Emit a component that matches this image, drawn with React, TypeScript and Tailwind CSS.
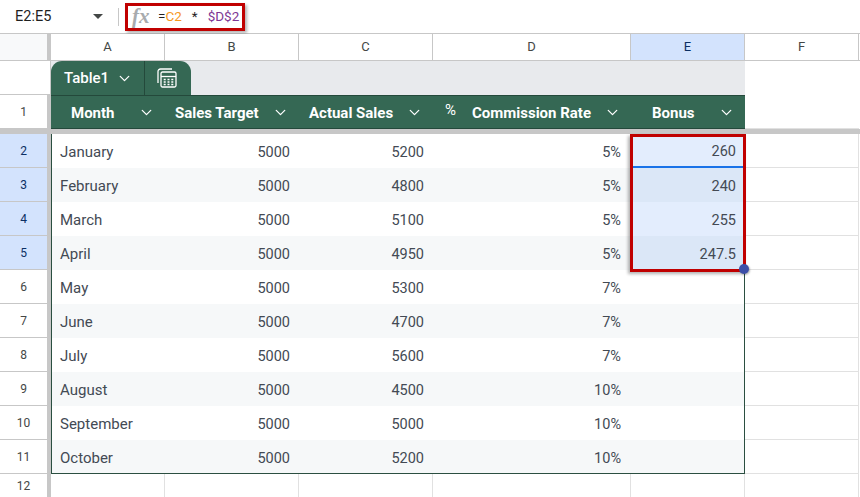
import { ChevronDown } from 'lucide-react';

const COLS = 'grid grid-cols-[51px_114px_134px_134px_198px_114px_114px_1px]';
const FONT = "font-['Roboto',sans-serif]";

const rows = [
  ['January', '5000', '5200', '5%', '260'],
  ['February', '5000', '4800', '5%', '240'],
  ['March', '5000', '5100', '5%', '255'],
  ['April', '5000', '4950', '5%', '247.5'],
  ['May', '5000', '5300', '7%', ''],
  ['June', '5000', '4700', '7%', ''],
  ['July', '5000', '5600', '7%', ''],
  ['August', '5000', '4500', '10%', ''],
  ['September', '5000', '5000', '10%', ''],
  ['October', '5000', '5200', '10%', ''],
];

const Chevron = () => <ChevronDown size={17} strokeWidth={1.8} className="text-white" />;

const TableIcon = () => (
  <svg width="20" height="20" viewBox="0 0 20 20" fill="none" stroke="white" strokeWidth="1.3">
    <path d="M1 15V3.5C1 2.1 2.1 1 3.5 1H15" />
    <rect x="4" y="4" width="15" height="15" rx="1.5" />
    <path d="M4 8.5H19" />
    <path d="M6.7 11.5H8.7M10.5 11.5H12.5M14.3 11.5H16.3M6.7 14H8.7M10.5 14H12.5M14.3 14H16.3M6.7 16.5H8.7M10.5 16.5H12.5M14.3 16.5H16.3" strokeWidth="1.5" />
  </svg>
);

const ColumnHeader = ({ label, selected }: { label: string; selected?: boolean }) => (
  <div
    className={`flex items-center justify-center border-r border-[#c7c7c7] text-[13px] ${
      selected ? 'bg-[#d3e3fd] text-[#0b2f63]' : 'bg-white text-[#444746]'
    }`}
  >
    {label}
  </div>
);

const RowNumber = ({ n, selected }: { n: number; selected?: boolean }) => (
  <div
    className={`flex items-center justify-center border-r-[4px] border-b border-r-[#c7c7c7] border-b-[#c7c7c7] text-[12px] ${
      selected ? 'bg-[#d3e3fd] text-[#0b2f63]' : 'bg-white text-[#444746]'
    }`}
  >
    {n}
  </div>
);

const HeaderCell = ({ label, className }: { label: string; className?: string }) => (
  <div className={`flex items-center ${className ?? ''}`}>
    <span className="pt-[3px] text-[15px] font-bold whitespace-nowrap text-white">{label}</span>
    <Chevron />
  </div>
);

export default function App() {
  return (
    <div className={`${FONT} h-[497px] w-[860px] overflow-hidden bg-white`}>
      {/* formula bar */}
      <div className="flex h-[34px] items-center border-b border-[#c7c7c7]">
        <span className="ml-[15px] w-[78px] text-[14.5px] text-[#1f1f1f]">E2:E5</span>
        <span className="h-0 w-0 border-x-[5px] border-t-[5px] border-x-transparent border-t-[#444746]" />
        <span className="ml-[15px] h-[18px] w-px bg-[#c7c7c7]" />
        <div className="ml-[6px] flex h-[28px] w-[120px] items-center border-[3px] border-[#c00000] pl-[4px] shadow-[2px_2px_3px_rgba(0,0,0,0.3)]">
          <span className="w-[26px] font-['Liberation_Serif',serif] text-[21px] leading-none font-bold text-[#a8abae] italic">fx</span>
          <span className="flex text-[13.5px] whitespace-pre text-[#1f1f1f]">
            =<span className="text-[#f7981d]">C2</span>
            <span className="ml-[10px]">*</span>
            <span className="ml-[10px] text-[#7e3794]">$D$2</span>
          </span>
        </div>
      </div>

      {/* column letters */}
      <div className={`${COLS} h-[27px] border-b border-[#c7c7c7]`}>
        <div className="border-r-[4px] border-r-[#c7c7c7] bg-[#f8f9fa]" />
        <ColumnHeader label="A" />
        <ColumnHeader label="B" />
        <ColumnHeader label="C" />
        <ColumnHeader label="D" />
        <ColumnHeader label="E" selected />
        <ColumnHeader label="F" />
        <div className="bg-white" />
      </div>

      {/* table tab */}
      <div className="flex h-[34px]">
        <div className="w-[51px] shrink-0 border-r border-b border-[#c7c7c7]" />
        <div className="flex w-[694px] bg-[#e8eaed]">
          <div className="flex h-[34px] w-[140px] items-center rounded-t-[11px] bg-[#356854] text-white">
            <div className="flex h-full w-[94px] items-center gap-[7px] border-r border-[#24493b] pl-[13px]">
              <span className="text-[15px] font-medium">Table1</span>
              <Chevron />
            </div>
            <div className="flex flex-1 items-center justify-center pr-[2px]">
              <TableIcon />
            </div>
          </div>
        </div>
      </div>

      {/* table header */}
      <div className={`${COLS} h-[34px]`}>
        <RowNumber n={1} />
        <div className="col-span-5 flex border-y border-[#24493b] bg-[#356854]">
          <HeaderCell label="Month" className="w-[114px] justify-between pr-[10px] pl-[20px]" />
          <HeaderCell label="Sales Target" className="w-[134px] justify-between pr-[10px] pl-[10px]" />
          <HeaderCell label="Actual Sales" className="w-[134px] justify-between pr-[10px] pl-[10px]" />
          <div className="flex w-[198px] items-center pr-[10px] pl-[12px]">
            <span className="w-[27px] pb-[3px] text-[15px] text-white">%</span>
            <span className="flex-1 pt-[3px] text-[15px] font-bold whitespace-nowrap text-white">Commission Rate</span>
            <Chevron />
          </div>
          <div className="flex w-[114px] items-center justify-between pr-[10px] pl-[21px]">
            <span className="pt-[3px] text-[15px] font-bold text-white">Bonus</span>
            <Chevron />
          </div>
        </div>
        <div className="border-b border-[#e1e1e1]" />
      </div>

      {/* frozen row line */}
      <div className="h-[5px] bg-[#c7c7c7]" />

      {/* data rows */}
      <div className="relative">
        {rows.map((row, i) => {
          const stripe = i % 2 === 1 ? 'bg-[#f6f8f9]' : 'bg-white';
          const last = i === rows.length - 1;
          const edge = last ? 'shadow-[inset_0_-1px_0_#2b4f41]' : '';
          const bonusBg = i > 3 ? stripe : i % 2 === 1 ? 'bg-[#dbe7f7]' : 'bg-[#e3edfd]';
          return (
            <div key={row[0]} className={`${COLS} h-[34px] text-[14.5px] text-[#434a54]`}>
              <RowNumber n={i + 2} selected={i < 4} />
              <div className={`${stripe} ${edge} flex items-center border-l border-[#2b4f41] pt-[3px] pl-[8px] text-[15px]`}>{row[0]}</div>
              <div className={`${stripe} ${edge} flex items-center justify-end pt-[3px] pr-[9px]`}>{row[1]}</div>
              <div className={`${stripe} ${edge} flex items-center justify-end pt-[3px] pr-[9px]`}>{row[2]}</div>
              <div className={`${stripe} ${edge} flex items-center justify-end pt-[3px] pr-[10px]`}>{row[3]}</div>
              <div
                className={`${bonusBg} ${edge} flex items-center justify-end border-r border-[#2b4f41] pt-[3px] pr-[8px] ${
                  i === 0 ? 'border-b-2 border-b-[#1a73e8]' : ''
                }`}
              >
                {row[4]}
              </div>
              <div className="border-r border-b border-[#e1e1e1]" />
              <div />
            </div>
          );
        })}

        {/* red selection box */}
        <div className="absolute top-0 left-[630px] h-[138px] w-[116px] border-[3px] border-[#c00000] shadow-[-2px_2px_3px_rgba(0,0,0,0.3)]" />
        <div className="absolute top-[130px] left-[739px] h-[10px] w-[10px] rounded-full bg-[#3c4fa8] shadow-[1px_1px_2px_rgba(0,0,0,0.3)]" />

        {/* row 12 */}
        <div className={`${COLS} h-[24px]`}>
          <div className="flex items-center justify-center border-r-[4px] border-r-[#c7c7c7] text-[12px] text-[#444746]">12</div>
          <div className="border-r border-[#e1e1e1]" />
          <div className="border-r border-[#e1e1e1]" />
          <div className="border-r border-[#e1e1e1]" />
          <div className="border-r border-[#e1e1e1]" />
          <div className="border-r border-[#e1e1e1]" />
          <div className="border-r border-[#e1e1e1]" />
        </div>
      </div>
    </div>
  );
}
